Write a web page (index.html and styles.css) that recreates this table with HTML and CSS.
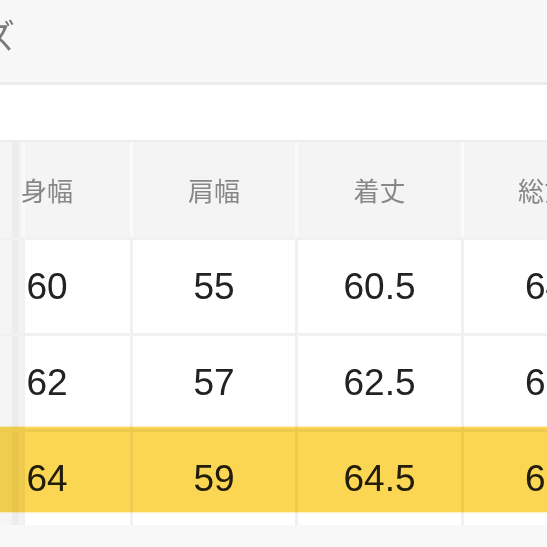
FILE: index.html
```html
<!DOCTYPE html>
<html lang="ja">
<head>
<meta charset="utf-8">
<title>サイズ</title>
<link rel="stylesheet" href="styles.css">
</head>
<body>
<div class="page">
  <div class="topbar"><span class="title">サイズ</span></div>
  <div class="band"></div>
  <div class="head">
    <div class="hcell stub"></div>
    <div class="hcell c1">身幅</div>
    <div class="hcell">肩幅</div>
    <div class="hcell">着丈</div>
    <div class="hcell c4">総丈</div>
  </div>
  <div class="body">
    <div class="row">
      <div class="stub"></div>
      <div class="cell c1">60</div>
      <div class="cell">55</div>
      <div class="cell">60.5</div>
      <div class="cell c4">64.5</div>
    </div>
    <div class="row">
      <div class="stub"></div>
      <div class="cell c1">62</div>
      <div class="cell">57</div>
      <div class="cell">62.5</div>
      <div class="cell c4">66.5</div>
    </div>
    <div class="row hl">
      <div class="stub"></div>
      <div class="cell c1">64</div>
      <div class="cell">59</div>
      <div class="cell">64.5</div>
      <div class="cell c4">68.5</div>
    </div>
  </div>
</div>
</body>
</html>
```
FILE: styles.css
```css
html, body {
  margin: 0;
  padding: 0;
  background: #f8f8f8;
}
.page {
  width: 547px;
  height: 547px;
  overflow: hidden;
  background: #f8f8f8;
  font-family: "Liberation Sans", "Noto Sans CJK JP", sans-serif;
}
.topbar {
  height: 82px;
  background: #f7f7f7;
  border-bottom: 3px solid #ececec;
  display: flex;
  align-items: center;
}
.title {
  font-family: "Noto Sans CJK JP", sans-serif;
  font-size: 34px;
  color: #7a7a7a;
  margin-left: -86px;
  margin-top: -14px;
  white-space: nowrap;
}
.band {
  height: 55px;
  background: #ffffff;
  border-bottom: 2px solid #ededed;
}
.head {
  display: grid;
  grid-template-columns: 22px 105px 162px 163px 1fr;
  column-gap: 3px;
  height: 95px;
  background: #fafafa;
}
.hcell {
  background: #f4f4f4;
  display: flex;
  align-items: center;
  justify-content: center;
  font-family: "Noto Sans CJK JP", sans-serif;
  font-size: 26px;
  color: #878787;
  white-space: nowrap;
}
.hcell.c1 {
  padding-right: 61px;
}
.hcell.c4 {
  justify-content: flex-start;
  padding-left: 54px;
}
.body {
  display: flex;
  flex-direction: column;
  gap: 3px;
  padding-top: 3px;
  background: #f1f1f1;
}
.row {
  display: grid;
  grid-template-columns: 22px 105px 162px 163px 1fr;
  column-gap: 3px;
  height: 93px;
  background: #f1f1f1;
  position: relative;
}
.stub {
  background: linear-gradient(to right, #f5f5f5 0, #f5f5f5 11px, #ececec 13px, #ececec 18px, #f4f4f4 20px);
}
.cell {
  background: #ffffff;
  display: flex;
  align-items: center;
  justify-content: center;
  font-size: 37px;
  color: #222222;
  white-space: nowrap;
  overflow: hidden;
}
.cell.c1 {
  padding-right: 61px;
}
.cell.c4 {
  justify-content: flex-start;
  padding-left: 61px;
}
.row.hl::after {
  content: "";
  position: absolute;
  left: 0;
  right: 0;
  top: -5px;
  height: 85px;
  background: #fbd652;
  mix-blend-mode: multiply;
  box-shadow: 0 0 2px #fbd652;
}
```
